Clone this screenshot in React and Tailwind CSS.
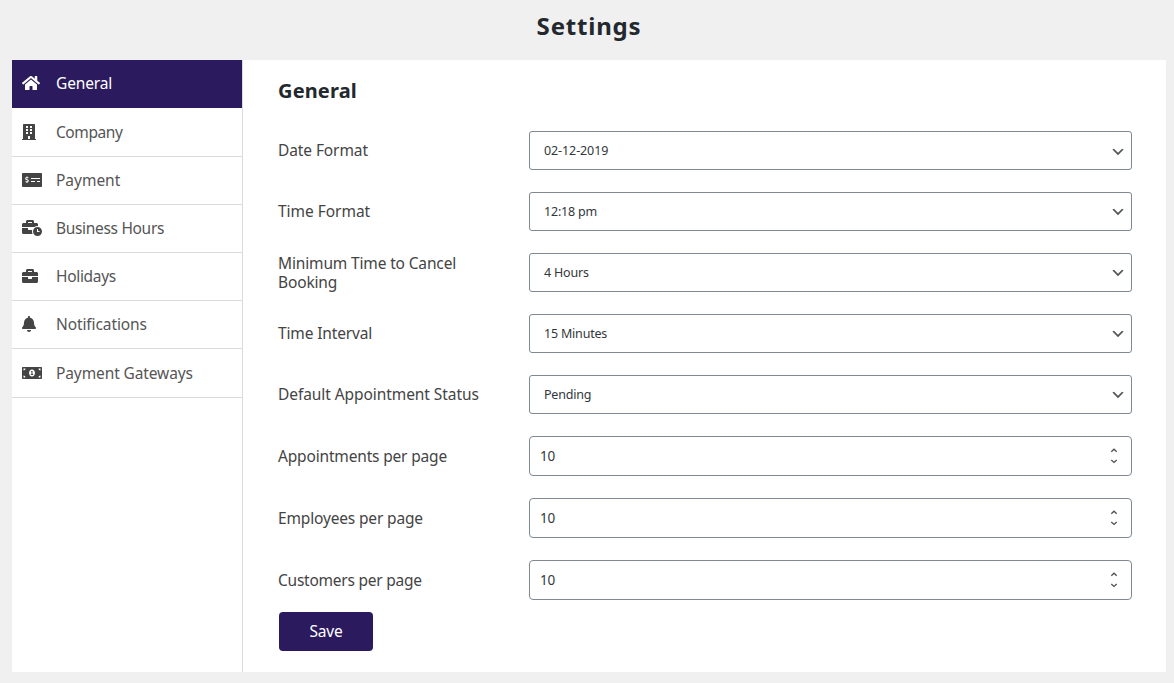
import React from "react";
import { FaHome, FaBuilding, FaMoneyCheckAlt, FaBusinessTime, FaBriefcase, FaBell, FaMoneyBillAlt } from "react-icons/fa";

const nav = [
  { label: "General", icon: FaHome, size: "h-12 pb-0.5 bg-[#2b1b5e] text-white", iconSize: "w-[18px]", tracking: "tracking-[-0.13px]" },
  { label: "Company", icon: FaBuilding, size: "h-[49px] border-b text-[#555]", iconSize: "w-[14px]", tracking: "tracking-[-0.43px]" },
  { label: "Payment", icon: FaMoneyCheckAlt, size: "h-12 pb-px border-b text-[#555]", iconSize: "w-5", tracking: "tracking-[-0.02px]" },
  { label: "Business Hours", icon: FaBusinessTime, size: "h-12 pb-px border-b text-[#555]", iconSize: "w-5", tracking: "tracking-[-0.32px]" },
  { label: "Holidays", icon: FaBriefcase, size: "h-12 pb-px border-b text-[#555]", iconSize: "w-4", tracking: "tracking-[-0.32px]" },
  { label: "Notifications", icon: FaBell, size: "h-12 pb-px border-b text-[#555]", iconSize: "w-[14px]", tracking: "tracking-[-0.1px]" },
  { label: "Payment Gateways", icon: FaMoneyBillAlt, size: "h-[49px] border-b text-[#555]", iconSize: "w-5", tracking: "tracking-[-0.11px]" },
];

const selects = [
  { label: "Date Format", value: "02-12-2019", tracking: "tracking-[-0.1px]", valueTracking: "tracking-[-0.1px]", arrow: "top-[13px]" },
  { label: "Time Format", value: "12:18 pm", tracking: "tracking-[-0.03px]", valueTracking: "tracking-[-0.2px]", arrow: "top-3" },
  { label: "Minimum Time to Cancel Booking", value: "4 Hours", tracking: "tracking-[-0.15px]", valueTracking: "tracking-[-0.2px]", arrow: "top-3" },
  { label: "Time Interval", value: "15 Minutes", tracking: "tracking-[-0.14px]", valueTracking: "tracking-[-0.2px]", arrow: "top-3" },
  { label: "Default Appointment Status", value: "Pending", tracking: "tracking-[-0.07px]", valueTracking: "tracking-[-0.2px]", arrow: "top-3" },
];

const numbers = [
  { label: "Appointments per page", tracking: "tracking-[-0.17px]" },
  { label: "Employees per page", tracking: "tracking-[-0.16px]" },
  { label: "Customers per page", tracking: "tracking-[-0.24px]" },
];

function Label({ text, tracking }) {
  return (
    <span className={`w-[251px] shrink-0 pr-12 whitespace-normal text-[15.5px] leading-[19px] text-[#444] ${tracking}`}>
      {text}
    </span>
  );
}

export default function App() {
  return (
    <div className="flex h-[683px] w-full flex-col bg-[#f0f0f0] pr-2 pb-[11px] pl-3 font-['Noto_Sans',sans-serif]">
      <h1 className="h-[60px] pt-2 text-center text-[24px] leading-9 font-bold tracking-[0.8px] text-[#23282d]">
        Settings
      </h1>
      <div className="flex min-h-0 flex-1 bg-white">
        <nav className="w-[231px] shrink-0 border-r border-[#dbdbdb]">
          {nav.map(({ label, icon: Icon, size, iconSize, tracking }, i) => (
            <a key={label} className={`flex items-center border-[#dbdbdb] pl-2.5 ${size}`}>
              <span className="w-[34px]">
                <Icon className={`h-4 ${iconSize} ${i ? "text-[#444]" : "text-white"}`} />
              </span>
              <span className={`text-[15.5px] leading-5 ${tracking}`}>{label}</span>
            </a>
          ))}
        </nav>
        <main className="min-w-0 flex-1 pr-[34px] pl-[35px]">
          <h2 className="h-[71px] pt-4 text-[20px] leading-[30px] font-bold tracking-[0.15px] text-[#23282d]">
            General
          </h2>
          <form className="flex flex-col gap-[22px]">
            {selects.map((s) => (
              <label key={s.label} className="flex h-[39px] items-center">
                <Label text={s.label} tracking={s.tracking} />
                <span className="relative flex h-full flex-1">
                  <select
                    className={`w-full appearance-none rounded-[3px] border border-[#7e8993] bg-white pt-0.5 pl-[14px] text-[12.5px] text-[#32373c] ${s.valueTracking}`}
                    defaultValue={s.value}
                  >
                    <option>{s.value}</option>
                  </select>
                  <svg className={`pointer-events-none absolute right-1.5 h-4 w-4 ${s.arrow}`} viewBox="0 0 20 20">
                    <path d="M5 6l5 5 5-5 2 1-7 7-7-7 2-1z" fill="#555" />
                  </svg>
                </span>
              </label>
            ))}
            {numbers.map((n) => (
              <label key={n.label} className="flex h-10 items-center">
                <Label text={n.label} tracking={n.tracking} />
                <span className="relative flex h-full flex-1">
                  <input
                    className="w-full rounded-[4px] border border-[#7e8993] bg-white pl-2.5 text-[13.5px] tracking-[-0.1px] text-[#32373c]"
                    inputMode="numeric"
                    defaultValue="10"
                  />
                  <svg
                    className="pointer-events-none absolute top-3 right-[14px] h-4 w-2"
                    viewBox="0 0 8 16"
                    fill="none"
                    stroke="#505050"
                    strokeWidth="1.3"
                  >
                    <path d="M1.3 3.8L4 1.2l2.7 2.6M1.3 11.9L4 14.4l2.7-2.5" />
                  </svg>
                </span>
              </label>
            ))}
          </form>
          <button className="mt-3 ml-px h-[39px] w-[94px] rounded-[4px] bg-[#2b1b5e] text-[15.5px] tracking-[-0.2px] text-white">
            Save
          </button>
        </main>
      </div>
    </div>
  );
}
